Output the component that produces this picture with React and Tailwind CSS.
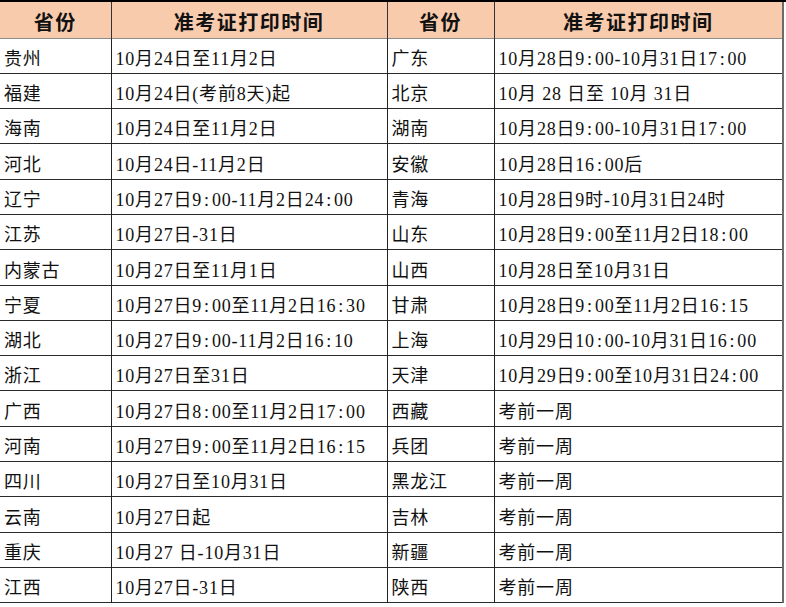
import React from 'react'

const rows = [
  ['贵州', '10月24日至11月2日', '广东', '10月28日9:00-10月31日17:00'],
  ['福建', '10月24日(考前8天)起', '北京', '10月 28 日至 10月 31日'],
  ['海南', '10月24日至11月2日', '湖南', '10月28日9:00-10月31日17:00'],
  ['河北', '10月24日-11月2日', '安徽', '10月28日16:00后'],
  ['辽宁', '10月27日9:00-11月2日24:00', '青海', '10月28日9时-10月31日24时'],
  ['江苏', '10月27日-31日', '山东', '10月28日9:00至11月2日18:00'],
  ['内蒙古', '10月27日至11月1日', '山西', '10月28日至10月31日'],
  ['宁夏', '10月27日9:00至11月2日16:30', '甘肃', '10月28日9:00至11月2日16:15'],
  ['湖北', '10月27日9:00-11月2日16:10', '上海', '10月29日10:00-10月31日16:00'],
  ['浙江', '10月27日至31日', '天津', '10月29日9:00至10月31日24:00'],
  ['广西', '10月27日8:00至11月2日17:00', '西藏', '考前一周'],
  ['河南', '10月27日9:00至11月2日16:15', '兵团', '考前一周'],
  ['四川', '10月27日至10月31日', '黑龙江', '考前一周'],
  ['云南', '10月27日起', '吉林', '考前一周'],
  ['重庆', '10月27 日-10月31日', '新疆', '考前一周'],
  ['江西', '10月27日-31日', '陕西', '考前一周'],
]

const font = { fontFamily: '"Liberation Serif", "Noto Sans CJK SC", serif' }

// colons are half-width in the original font, give them some room
const cell = (text) =>
  text.split(/(:)/).map((part, i) =>
    part === ':' ? <span key={i} className="mx-[2px]">:</span> : part
  )

export default function App() {
  return (
    <div className="w-[786px] h-[607px] bg-white overflow-hidden text-[#111]" style={font}>
      <div className="h-[2px] bg-black" />
      <table className="w-[783px] table-fixed border-collapse">
        <colgroup>
          <col className="w-[111px]" />
          <col className="w-[276px]" />
          <col className="w-[107px]" />
          <col className="w-[289px]" />
        </colgroup>
        <thead>
          <tr className="h-[36px] bg-[#f8cbad] border-b border-[#8c8c8c]">
            {['省份', '准考证打印时间', '省份', '准考证打印时间'].map((h, i) => (
              <th
                key={i}
                className={
                  'align-bottom pb-[2px] text-center text-[20px] leading-[26px] font-bold tracking-[1.5px] ' +
                  (i === 3 ? 'border-r-2 border-r-[#6b6b6b]' : 'border-r border-r-[#333]')
                }
              >
                {h}
              </th>
            ))}
          </tr>
        </thead>
        <tbody>
          {rows.map((r, ri) => (
            <tr key={ri} className="h-[35.3px] border-b border-[#2a2a2a]">
              {r.map((c, ci) => (
                <td
                  key={ci}
                  className={
                    'align-bottom pb-[3px] pl-[4px] text-[18px] leading-[22px] tracking-[0.8px] whitespace-pre ' +
                    (ci === 3 ? 'border-r-2 border-r-[#6b6b6b]' : 'border-r border-r-[#222]')
                  }
                >
                  {cell(c)}
                </td>
              ))}
            </tr>
          ))}
        </tbody>
      </table>
    </div>
  )
}
